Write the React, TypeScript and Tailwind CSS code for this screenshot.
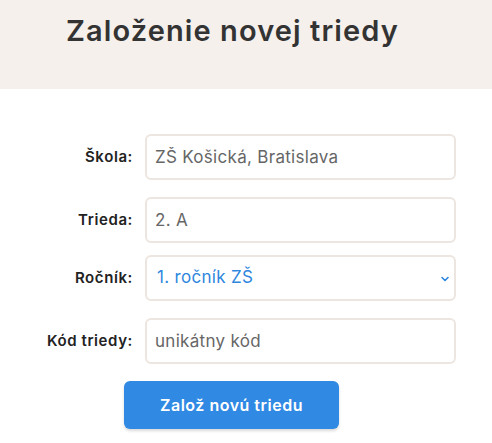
import { ChevronDown } from 'lucide-react';

const font = { fontFamily: 'Inter, "Open Sans", sans-serif' };

function Row({ label, className = '', children }: { label: string; className?: string; children: React.ReactNode }) {
  return (
    <div className={`flex items-center ${className}`}>
      <label className="w-[145px] pr-[12px] text-right text-[15px] font-semibold tracking-[0.6px] text-[#222]">{label}</label>
      {children}
    </div>
  );
}

const inputCls =
  'h-[46px] w-[311px] rounded-[6px] border-2 border-[#ede6e0] px-[8px] text-[17px] tracking-[0.3px] text-[#666] outline-none placeholder:text-[#666]';

export default function App() {
  return (
    <div className="min-h-[443px] bg-white" style={font}>
      <div className="h-[89px] bg-[#f5f0ec] pl-[66px] pt-[9px]">
        <h1 className="text-[29px] font-semibold text-[#333] tracking-[1.1px]">Založenie novej triedy</h1>
      </div>

      <form className="flex flex-col gap-[17px] pt-[45px]">
        <Row label="Škola:">
          <input className={inputCls} defaultValue="ZŠ Košická, Bratislava" />
        </Row>
        <Row label="Trieda:">
          <input className={inputCls} defaultValue="2. A" />
        </Row>
        <Row label="Ročník:" className="-mt-[5px]">
          <div className="relative flex h-[46px] w-[311px] items-center rounded-[6px] border-2 border-[#ede6e0] px-[10px]">
            <span className="text-[17px] tracking-[0.3px] text-[#2e86de]">1. ročník ZŠ</span>
            <ChevronDown className="absolute right-[3px] top-[16px] text-[#2e86de]" size={12} strokeWidth={3.2} />
          </div>
        </Row>
        <Row label="Kód triedy:">
          <input className={inputCls} placeholder="unikátny kód" />
        </Row>
        <div className="pl-[124px]">
          <button className="h-[48px] w-[215px] rounded-[6px] bg-[#3089e3] text-[16px] font-semibold tracking-[0.5px] text-white shadow-[0_2px_3px_rgba(0,0,0,0.15)]">
            Založ novú triedu
          </button>
        </div>
      </form>
    </div>
  );
}
